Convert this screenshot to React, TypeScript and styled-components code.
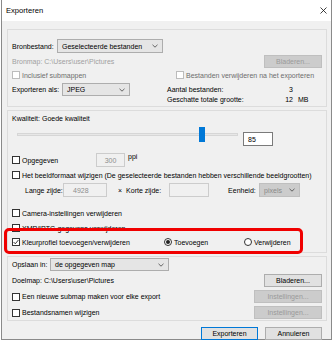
import React from "react";
import styled, { createGlobalStyle } from "styled-components";

const GlobalStyle = createGlobalStyle`
  html, body { margin: 0; padding: 0; background: #fff; }
  body {
    font-family: "Liberation Sans", Arial, sans-serif;
    font-size: 7px;
    color: #000;
  }
  * { box-sizing: border-box; }
`;

const Window = styled.div`
  position: relative;
  margin-left: 1px;
  width: 331px;
  height: 340px;
  border: 1px solid #8a8a8a;
  border-top: none;
  background: #f0f0f0;
  display: flex;
  flex-direction: column;
`;

const TitleBar = styled.div`
  flex: none;
  height: 21px;
  background: #fff;
  display: flex;
  align-items: center;
  justify-content: space-between;
  padding: 0 4px 0 4px;
  font-size: 7.6px;
`;

const Body = styled.div`
  flex: 1;
  padding: 8px 4px 0 5px;
  display: flex;
  flex-direction: column;
  gap: 3px;
`;

const Panel = styled.section<{ $pb: number }>`
  border: 1px solid #dcdcdc;
  padding: 0 4px ${(p) => p.$pb}px 4px;
`;

const Row = styled.div<{ $h: number; $mt: number; $pl?: number }>`
  display: flex;
  align-items: center;
  height: ${(p) => p.$h}px;
  margin-top: ${(p) => p.$mt}px;
  padding-left: ${(p) => p.$pl ?? 0}px;
`;

const Cell = styled.div<{ $w: number }>`
  flex: none;
  width: ${(p) => p.$w}px;
  display: flex;
  align-items: center;
  white-space: nowrap;
`;

const Text = styled.span<{ $tone?: "dim" | "faint" }>`
  white-space: nowrap;
  color: ${(p) => (p.$tone === "faint" ? "#a0a0a0" : p.$tone === "dim" ? "#6d6d6d" : "#000")};
`;

const Spacer = styled.div`
  flex: 1;
`;

const Box = styled.span<{ $disabled?: boolean }>`
  flex: none;
  width: 8px;
  height: 8px;
  margin-right: 2px;
  border: 1px solid ${(p) => (p.$disabled ? "#bcbcbc" : "#333")};
  background: #fff;
  display: flex;
  align-items: center;
  justify-content: center;
`;

const Radio = styled.span<{ $on?: boolean }>`
  flex: none;
  width: 8px;
  height: 8px;
  margin-right: 2px;
  border: 1px solid #333;
  border-radius: 50%;
  background: #fff;
  display: flex;
  align-items: center;
  justify-content: center;

  &::after {
    content: "";
    display: ${(p) => (p.$on ? "block" : "none")};
    width: 4px;
    height: 4px;
    border-radius: 50%;
    background: #222;
  }
`;

const Combo = styled.div<{ $w: number; $h?: number; $disabled?: boolean }>`
  flex: none;
  align-self: flex-start;
  width: ${(p) => p.$w}px;
  height: ${(p) => p.$h ?? 14}px;
  padding: 0 4px;
  border: 1px solid ${(p) => (p.$disabled ? "#bfbfbf" : "#adadad")};
  background: ${(p) => (p.$disabled ? "#cccccc" : "#e5e5e5")};
  color: ${(p) => (p.$disabled ? "#8a8a8a" : "#000")};
  display: flex;
  align-items: center;
  justify-content: space-between;
  white-space: nowrap;
`;

const Field = styled.div<{ $w: number; $disabled?: boolean; $mt?: number }>`
  flex: none;
  align-self: flex-start;
  margin-top: ${(p) => p.$mt ?? 0}px;
  width: ${(p) => p.$w}px;
  height: 14px;
  padding: 0 4px;
  border: 1px solid ${(p) => (p.$disabled ? "#cccccc" : "#7a7a7a")};
  background: ${(p) => (p.$disabled ? "#f0f0f0" : "#fff")};
  color: ${(p) => (p.$disabled ? "#8d8d8d" : "#000")};
  display: flex;
  align-items: center;
  justify-content: ${(p) => (p.$disabled ? "center" : "flex-start")};
`;

const Button = styled.div<{ $w: number; $disabled?: boolean; $primary?: boolean }>`
  flex: none;
  width: ${(p) => p.$w}px;
  height: 13px;
  border: 1px solid
    ${(p) => (p.$primary ? "#0078d7" : p.$disabled ? "#bfbfbf" : "#adadad")};
  background: ${(p) => (p.$disabled ? "#cccccc" : "#e1e1e1")};
  color: ${(p) => (p.$disabled ? "#9a9a9a" : "#000")};
  display: flex;
  align-items: center;
  justify-content: center;
  white-space: nowrap;
`;

const Stats = styled.div`
  align-self: flex-start;
  margin-top: 1px;
  display: grid;
  grid-template-columns: 113px 13px auto;
  grid-auto-rows: 10px;
  align-items: center;
`;

const StatValue = styled.span<{ $unit?: boolean }>`
  text-align: ${(p) => (p.$unit ? "left" : "right")};
  padding-left: ${(p) => (p.$unit ? 5 : 0)}px;
`;

const Slider = styled.div`
  position: relative;
  flex: none;
  width: 221px;
  height: 21px;
  margin-left: 5px;
`;

const Track = styled.div`
  margin-top: 7px;
  height: 3px;
  background: #e7e7e7;
  border: 1px solid #d6d6d6;
`;

const Thumb = styled.div`
  position: absolute;
  left: 182px;
  top: 1px;
  width: 6px;
  height: 15px;
  background: #0078d7;
`;

const Ppi = styled.span`
  align-self: flex-start;
  margin: 0 0 0 3px;
  line-height: 8px;
  margin-top: 0px;
`;

const Times = styled.span`
  margin: 0 4px 0 11px;
`;

const Footer = styled.div`
  display: flex;
  justify-content: flex-end;
  gap: 7px;
  margin-top: 3px;
  padding-right: 5px;
`;

const Highlight = styled.div`
  position: absolute;
  left: 2px;
  top: 228px;
  width: 299px;
  height: 26px;
  border: 3px solid #f00000;
  border-radius: 5px;
  pointer-events: none;
`;

const Chevron = () => (
  <svg width="6" height="4" viewBox="0 0 6 4">
    <polyline points="0.5,0.8 3,3.2 5.5,0.8" fill="none" stroke="#444" strokeWidth="0.8" />
  </svg>
);

const Check = () => (
  <svg width="6" height="6" viewBox="0 0 6 6">
    <polyline points="0.6,3 2.3,4.8 5.4,1" fill="none" stroke="#222" strokeWidth="0.9" />
  </svg>
);

const Close = () => (
  <svg width="7" height="7" viewBox="0 0 7 7">
    <path d="M0.5 0.5 L6.5 6.5 M6.5 0.5 L0.5 6.5" stroke="#111" strokeWidth="0.8" />
  </svg>
);

const CheckLabel = ({
  label,
  checked,
  disabled,
}: {
  label: string;
  checked?: boolean;
  disabled?: boolean;
}) => (
  <>
    <Box $disabled={disabled}>{checked && <Check />}</Box>
    <Text $tone={disabled ? "dim" : undefined}>{label}</Text>
  </>
);

export default function App() {
  return (
    <>
      <GlobalStyle />
      <Window>
        <TitleBar>
          <span>Exporteren</span>
          <Close />
        </TitleBar>
        <Body>
          <Panel $pb={3}>
            <Row $h={14} $mt={9}>
              <Cell $w={45}>Bronbestand:</Cell>
              <Combo $w={106}>
                <span>Geselecteerde bestanden</span>
                <Chevron />
              </Combo>
            </Row>
            <Row $h={14} $mt={1}>
              <Text $tone="faint">Bronmap: C:\Users\user\Pictures</Text>
              <Spacer />
              <Button $w={58} $disabled>
                Bladeren...
              </Button>
            </Row>
            <Row $h={10} $mt={2}>
              <Cell $w={164}>
                <CheckLabel label="Inclusief submappen" disabled />
              </Cell>
              <CheckLabel label="Bestanden verwijderen na het exporteren" disabled />
            </Row>
            <Row $h={20} $mt={3}>
              <Cell $w={155} style={{ alignSelf: "flex-start", height: 13 }}>
                <Cell $w={50}>Exporteren als:</Cell>
                <Combo $w={68} $h={13}>
                  <span>JPEG</span>
                  <Chevron />
                </Combo>
              </Cell>
              <Stats>
                <span>Aantal bestanden:</span>
                <StatValue>3</StatValue>
                <span />
                <span>Geschatte totale grootte:</span>
                <StatValue>12</StatValue>
                <StatValue $unit>MB</StatValue>
              </Stats>
            </Row>
          </Panel>

          <Panel $pb={5}>
            <Row $h={10} $mt={2}>
              <Text>Kwaliteit: Goede kwaliteit</Text>
            </Row>
            <Row $h={21} $mt={3} style={{ alignItems: "flex-start" }}>
              <Slider>
                <Track />
                <Thumb />
              </Slider>
              <Field $w={30} $mt={6} style={{ marginLeft: 5 }}>
                85
              </Field>
            </Row>
            <Row $h={14} $mt={6}>
              <Cell $w={84}>
                <CheckLabel label="Opgegeven" />
              </Cell>
              <Field $w={29} $disabled>
                300
              </Field>
              <Ppi>ppi</Ppi>
            </Row>
            <Row $h={10} $mt={3}>
              <CheckLabel label="Het beeldformaat wijzigen (De geselecteerde bestanden hebben verschillende beeldgrootten)" />
            </Row>
            <Row $h={14} $mt={3} $pl={13}>
              <Cell $w={38}>Lange zijde:</Cell>
              <Field $w={44} $disabled style={{ justifyContent: "flex-start", paddingLeft: 9 }}>
                4928
              </Field>
              <Times>×</Times>
              <Cell $w={43}>Korte zijde:</Cell>
              <Field $w={40} $disabled />
              <Cell $w={31} style={{ marginLeft: 19 }}>
                Eenheid:
              </Cell>
              <Combo $w={41} $disabled>
                <span>pixels</span>
                <Chevron />
              </Combo>
            </Row>
            <Row $h={10} $mt={11}>
              <CheckLabel label="Camera-instellingen verwijderen" />
            </Row>
            <Row $h={10} $mt={5}>
              <CheckLabel label="XMP/IPTC-gegevens verwijderen" />
            </Row>
            <Row $h={10} $mt={4}>
              <Cell $w={152}>
                <CheckLabel label="Kleurprofiel toevoegen/verwijderen" checked />
              </Cell>
              <Cell $w={80}>
                <Radio $on />
                <Text>Toevoegen</Text>
              </Cell>
              <Radio />
              <Text>Verwijderen</Text>
            </Row>
          </Panel>

          <Panel $pb={1}>
            <Row $h={13} $mt={1}>
              <Cell $w={38}>Opslaan in:</Cell>
              <Combo $w={119} $h={13}>
                <span>de opgegeven map</span>
                <Chevron />
              </Combo>
            </Row>
            <Row $h={13} $mt={3}>
              <Text>Doelmap: C:\Users\user\Pictures</Text>
              <Spacer />
              <Button $w={58}>Bladeren...</Button>
            </Row>
            <Row $h={13} $mt={3}>
              <CheckLabel label="Een nieuwe submap maken voor elke export" />
              <Spacer />
              <Button $w={68} $disabled>
                Instellingen...
              </Button>
            </Row>
            <Row $h={13} $mt={3}>
              <CheckLabel label="Bestandsnamen wijzigen" />
              <Spacer />
              <Button $w={68} $disabled>
                Instellingen...
              </Button>
            </Row>
          </Panel>

          <Footer>
            <Button $w={57} $primary>
              Exporteren
            </Button>
            <Button $w={57}>Annuleren</Button>
          </Footer>
        </Body>
        <Highlight />
      </Window>
    </>
  );
}
